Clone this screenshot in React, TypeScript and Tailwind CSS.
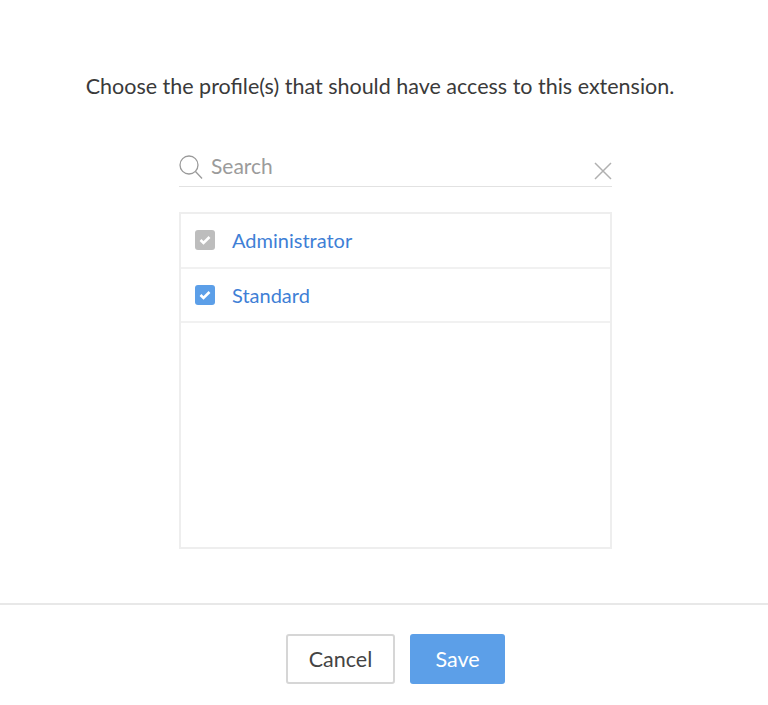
const profiles = [
  { name: 'Administrator', boxColor: 'bg-[#bdbdbd]' },
  { name: 'Standard', boxColor: 'bg-[#5c9fe8]' },
];

const CheckBox = ({ color }: { color: string }) => (
  <span className={`w-5 h-5 rounded-[3px] ${color} flex items-center justify-center shrink-0`}>
    <svg width="12" height="10" viewBox="0 0 12 10" fill="none">
      <path d="M1.5 5 L4.5 8 L10.5 2" stroke="white" strokeWidth="2.6" />
    </svg>
  </span>
);

const App = () => {
  return (
    <div className="w-[768px] h-[705px] bg-white overflow-hidden font-['Lato',sans-serif] flex flex-col">
      {/* Header */}
      <p className="pt-[73px] pr-[8px] text-center text-[21.5px] leading-[26px] text-[#3a3a3a]">
        Choose the profile(s) that should have access to this extension.
      </p>

      {/* Search */}
      <div className="mt-[40px] ml-[179px] w-[433px] h-[48px] border-b border-[#e2e2e2] flex items-center relative">
        <svg width="24" height="26" viewBox="0 0 24 26" fill="none" className="mt-[9px] shrink-0">
          <circle cx="10" cy="11" r="9" stroke="#9a9a9a" strokeWidth="1.3" />
          <path d="M16.5 17.5 L23 24.5" stroke="#9a9a9a" strokeWidth="1.3" />
        </svg>
        <span className="ml-[8px] mt-[6px] text-[21px] leading-[26px] text-[#9b9b9b]">Search</span>
        <svg width="20" height="20" viewBox="0 0 20 20" fill="none" className="absolute right-[-1px] top-[22px]">
          <path d="M2 2 L18 18 M18 2 L2 18" stroke="#b0b0b0" strokeWidth="1.5" />
        </svg>
      </div>

      {/* Profile list */}
      <div className="mt-[25px] ml-[179px] w-[433px] h-[337px] border-2 border-[#eeeeee]">
        {profiles.map((profile) => (
          <div
            key={profile.name}
            className="h-[54.5px] border-b-2 border-[#f1f1f1] flex items-center pl-[14px] gap-[17px]"
          >
            <CheckBox color={profile.boxColor} />
            <span className="text-[20px] text-[#3f7fd6]">{profile.name}</span>
          </div>
        ))}
      </div>

      {/* Footer */}
      <div className="mt-[54px] border-t-2 border-[#e8e8e8] pt-[29px] pl-[23px] flex justify-center gap-[15px]">
        <button className="w-[109px] h-[50px] rounded-[3px] border-2 border-[#d6d6d6] bg-white text-[21.5px] text-[#444444]">
          Cancel
        </button>
        <button className="w-[95px] h-[50px] rounded-[3px] bg-[#5c9fe8] text-[21.5px] text-white">
          Save
        </button>
      </div>
    </div>
  );
};

export default App;
